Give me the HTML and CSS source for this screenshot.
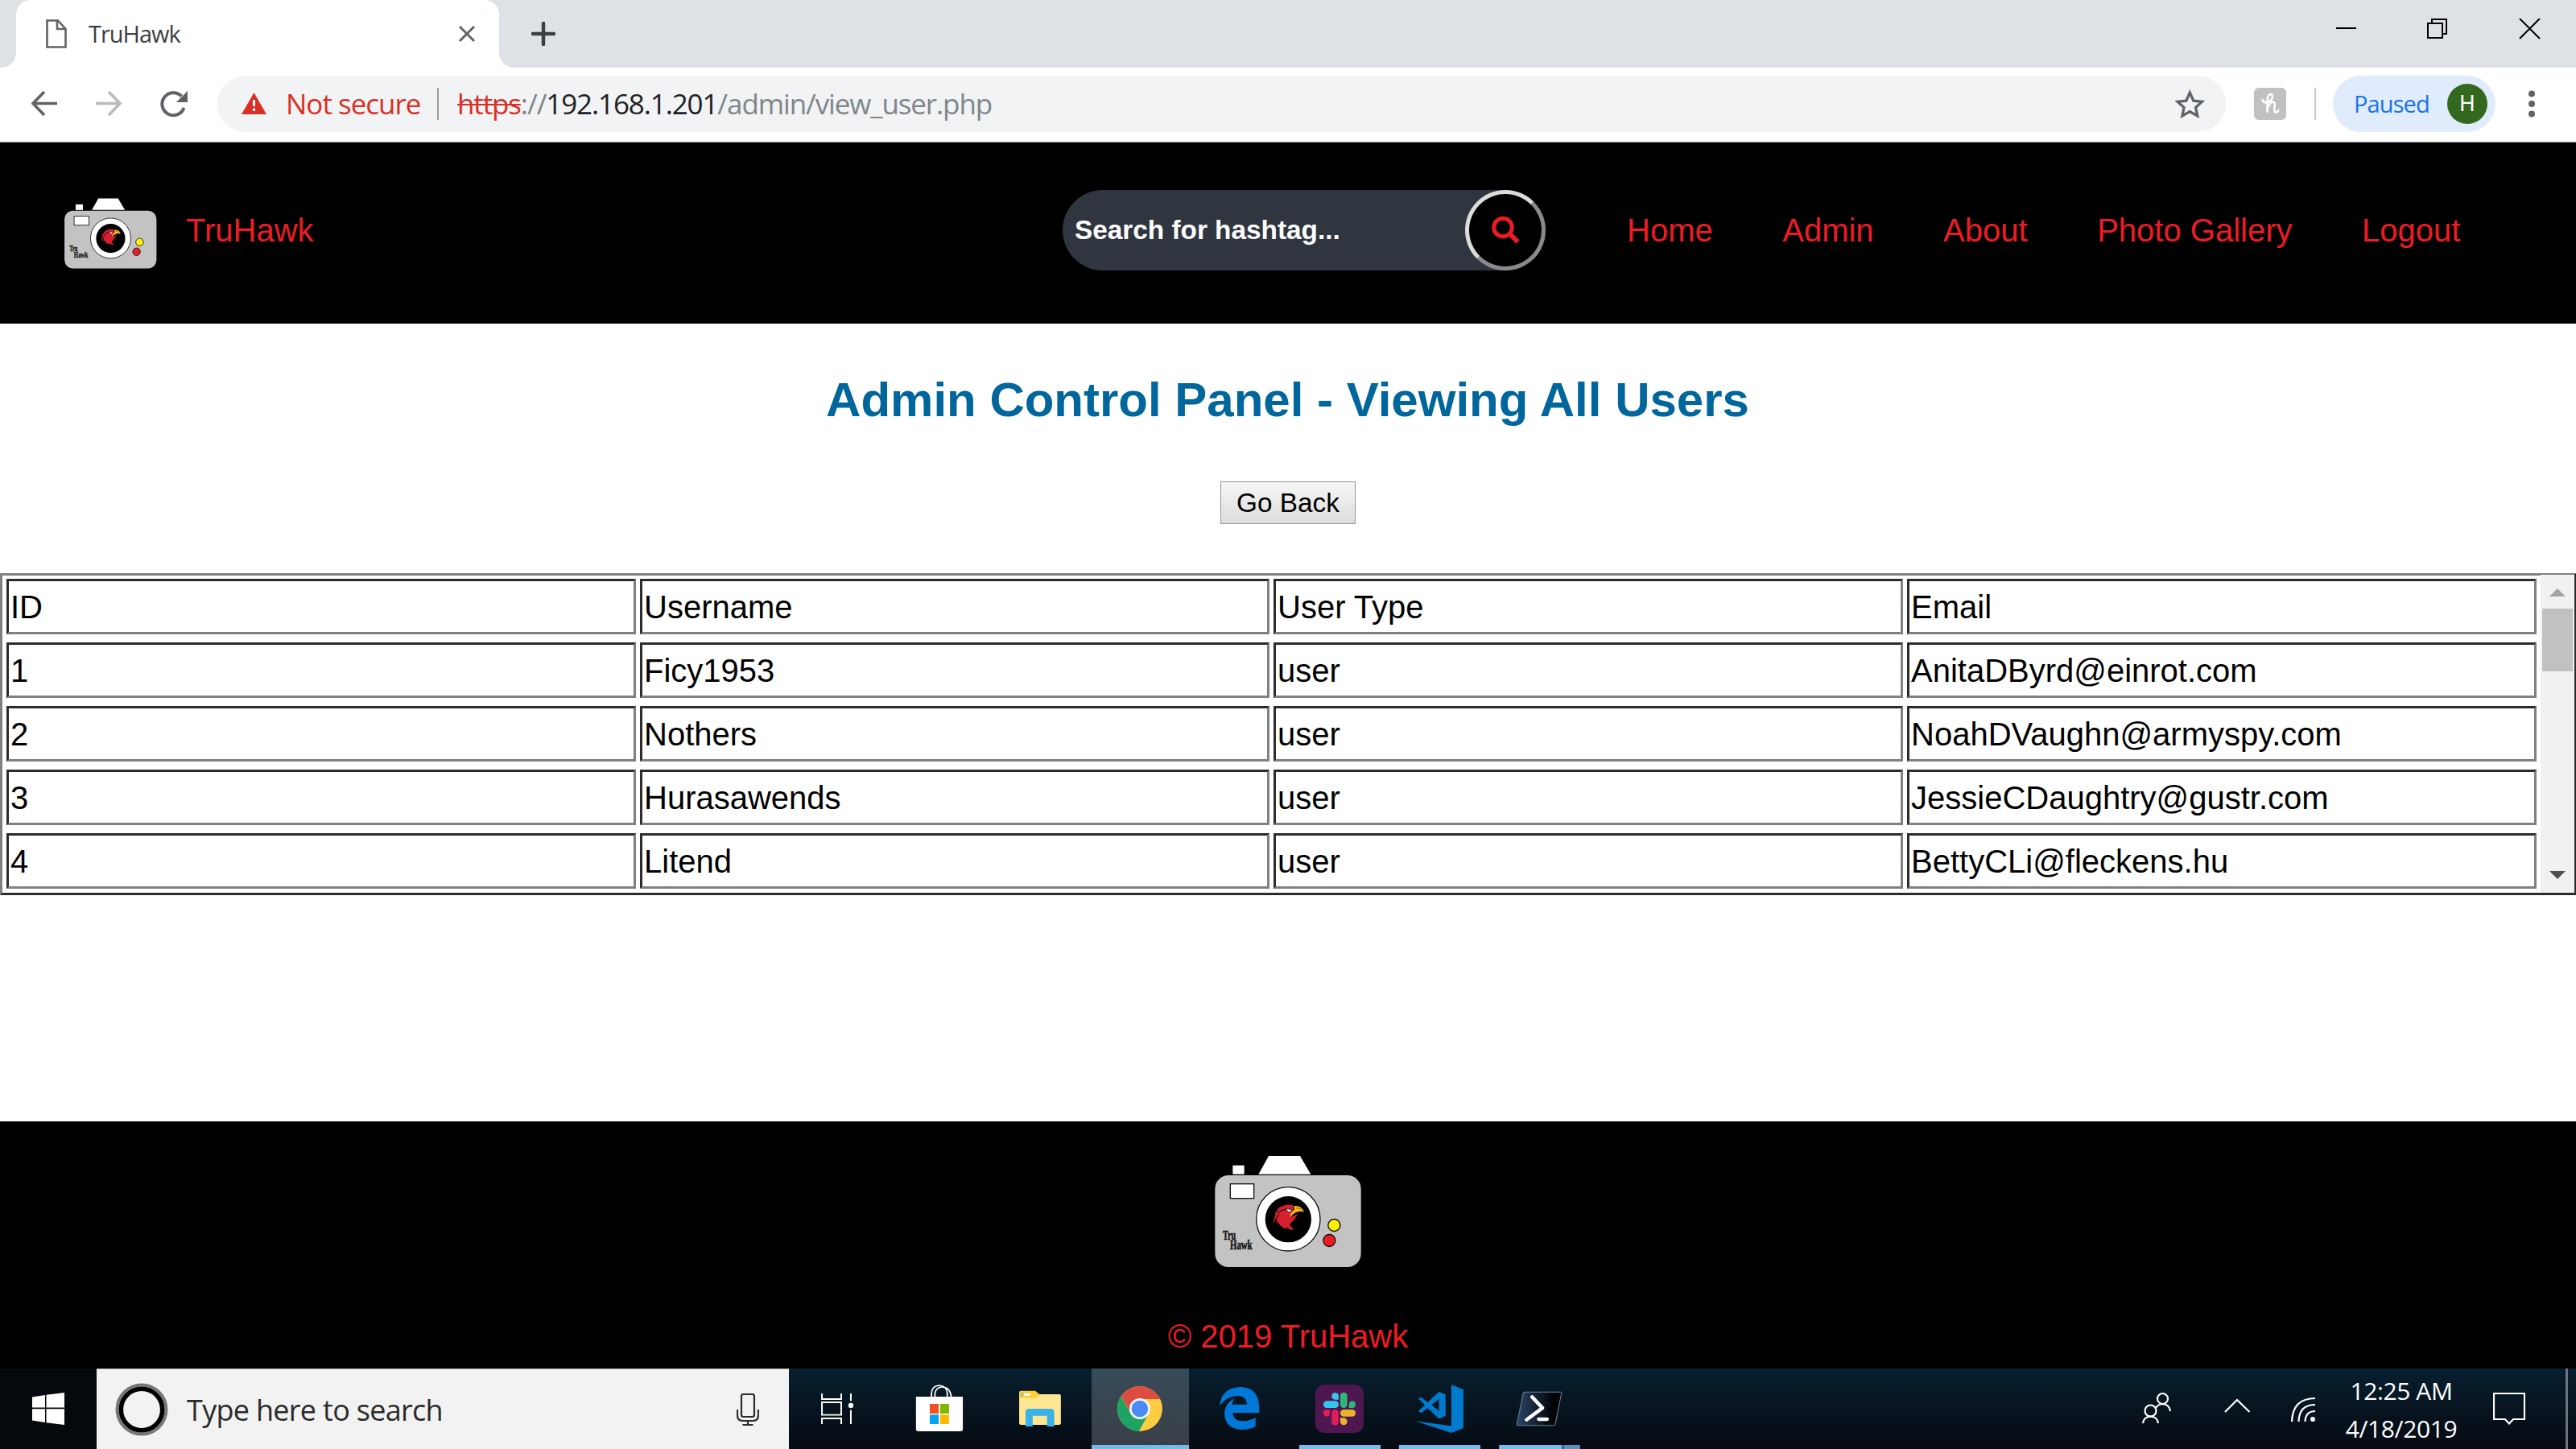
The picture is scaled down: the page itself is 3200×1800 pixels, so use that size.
FILE: index.html
```html
<!DOCTYPE html>
<html lang="en">
<head>
<meta charset="utf-8">
<title>TruHawk</title>
<link rel="stylesheet" href="styles.css">
</head>
<body>
<svg width="0" height="0" class="defs">
  <symbol id="camera" viewBox="318 155 564 435">
    <path d="M528 167H645L685 235H490Z" fill="#fff"/>
    <rect x="394" y="202" width="43" height="33" fill="#fff"/>
    <rect x="328" y="239" width="544" height="342" rx="50" fill="#c3c3c3"/>
    <rect x="385" y="271" width="88" height="54" fill="#fff" stroke="#111" stroke-width="4"/>
    <circle cx="601" cy="402" r="119" fill="#fff" stroke="#111" stroke-width="4"/>
    <circle cx="601" cy="403" r="86" fill="#000"/>
    <path d="M543 420L554 383L550 384L562 368L560 366Q572 352 596 349Q615 347 622 353L616 380L606 397L637 382L624 403L606 422L621 443Q604 442 598 433L590 438Q570 430 562 413L558 421L559 400L550 409Z" fill="#d6202f"/>
    <path d="M561 381Q570 368 591 366M553 404L567 383" stroke="#000" stroke-width="3" fill="none"/>
    <path d="M622 353Q652 350 660 376Q644 370 628 378Q614 386 608 397Q607 384 615 376Q624 370 624 362Z" fill="#fdb61c"/>
    <path d="M630 361L658 366" stroke="#7c4a10" stroke-width="2"/>
    <path d="M592 363L613 367L610 376L601 375Z" fill="#fff" stroke="#000" stroke-width="2"/>
    <circle cx="772" cy="425" r="22.500" fill="#fff200" stroke="#111" stroke-width="4"/>
    <circle cx="754" cy="482" r="22.500" fill="#ed1c24" stroke="#111" stroke-width="4"/>
    <text transform="translate(357 480) scale(.65 1)" class="cam-text">Tru</text>
    <text transform="translate(384 516) scale(.69 1)" class="cam-text">Hawk</text>
  </symbol>
</svg>

<div class="tabstrip">
  <div class="tab">
    <svg class="file" width="26" height="36" viewBox="57 24 26 36"><path d="M58.500 25.500H72L81.500 36V58.500H58.500ZM71 25.500V36H81.500" fill="none" stroke="#5f6368" stroke-width="2.600"/></svg>
    <span class="tab-title">TruHawk</span>
    <svg class="tab-close" width="22" height="22" viewBox="0 0 22 22"><path d="M2 2L20 20M20 2L2 20" stroke="#5f6368" stroke-width="3"/></svg>
  </div>
  <svg class="newtab" width="30" height="30" viewBox="0 0 30 30"><path d="M15 2V28M2 15H28" stroke="#3c4043" stroke-width="4.500" stroke-linecap="round"/></svg>
  <svg class="winctl" width="254" height="26" viewBox="2902 23 254 26"><path d="M2902 35H2927" stroke="#000" stroke-width="2"/><path d="M3016 29H3034V47H3016ZM3021 29V24H3039V42H3034M3130 23L3155 48M3155 23L3130 48" fill="none" stroke="#000" stroke-width="2"/></svg>
</div>

<div class="toolbar">
  <svg class="navs" width="196" height="34" viewBox="38 112 196 34" fill="none" stroke-width="3.600">
    <path d="M71 128.500H42M55 114L41 128.500L55 143" stroke="#5f6368"/>
    <path d="M119 128.500H148M135 114L149 128.500L135 143" stroke="#bababb"/>
    <path d="M228.500 134A14 14 0 1 1 225.500 119.500" stroke="#5f6368" stroke-width="4"/><path d="M233 113V127H219Z" fill="#5f6368"/>
  </svg>
  <div class="omnibox">
    <svg width="32" height="28" viewBox="300 116 32 28"><path d="M315.500 116L331 143H300Z" fill="#d93025"/><path d="M315.500 125V133M315.500 135.500V139" stroke="#fff" stroke-width="3"/></svg>
    <span class="notsecure">Not secure</span>
    <i class="odiv"></i>
    <span class="url"><s>https</s>://<b>192.168.1.201</b>/admin/view_user.php</span>
    <svg class="star" width="37" height="36" viewBox="2702 111 37 36"><path d="M2720.300 115L2724.800 125.200L2735.500 126.300L2727.500 133.500L2729.800 144L2720.300 138.500L2710.800 144L2713.100 133.500L2705.100 126.300L2715.800 125.200Z" fill="none" stroke="#5f6368" stroke-width="3.200"/></svg>
  </div>
  <svg class="honey" width="40" height="40" viewBox="2800 109 40 40"><rect x="2800" y="109" width="40" height="40" rx="6" fill="#c1c1c1"/><path d="M2810.500 124Q2812 128.500 2817 127Q2823 124.500 2823 119.500Q2822 116 2819 117.500Q2816.600 119.500 2816.600 125V139M2816.600 136Q2819 127 2823.500 126.500Q2827 127 2825.500 133Q2824.500 139 2827 139.500Q2829.500 139.500 2830.500 137" fill="none" stroke="#fff" stroke-width="2.600" stroke-linecap="round"/></svg>
  <i class="tdiv"></i>
  <div class="profile"><span class="paused">Paused</span><span class="avatar">H</span></div>
  <svg class="dots" width="10" height="36" viewBox="0 0 10 36" fill="#5f6368"><circle cx="5" cy="5.500" r="4"/><circle cx="5" cy="18" r="4"/><circle cx="5" cy="30.500" r="4"/></svg>
</div>

<header class="header">
  <svg class="logo" width="118.500" height="91.500"><use href="#camera"/></svg>
  <a class="brand">TruHawk</a>
  <div class="search">
    <span class="search-text">Search for hashtag...</span>
    <span class="search-btn"><svg width="36" height="36" viewBox="1852 267 36 36" fill="none" stroke="#ed1c24"><circle cx="1867" cy="281.500" r="11.300" stroke-width="5"/><path d="M1875 289L1885.500 299.500" stroke-width="6"/></svg></span>
  </div>
  <nav class="menu"><a>Home</a><a>Admin</a><a>About</a><a>Photo Gallery</a><a>Logout</a></nav>
</header>

<main class="main">
  <h1>Admin Control Panel - Viewing All Users</h1>
  <button class="back">Go Back</button>
  <div class="users">
    <div class="grid">
      <div>ID</div><div>Username</div><div>User Type</div><div>Email</div>
      <div>1</div><div>Ficy1953</div><div>user</div><div>AnitaDByrd@einrot.com</div>
      <div>2</div><div>Nothers</div><div>user</div><div>NoahDVaughn@armyspy.com</div>
      <div>3</div><div>Hurasawends</div><div>user</div><div>JessieCDaughtry@gustr.com</div>
      <div>4</div><div>Litend</div><div>user</div><div>BettyCLi@fleckens.hu</div>
    </div>
    <div class="scrollbar"><i class="up"></i><i class="thumb"></i><i class="down"></i></div>
  </div>
</main>

<footer class="footer">
  <svg width="188" height="145"><use href="#camera"/></svg>
  <p>© 2019 TruHawk</p>
</footer>

<div class="taskbar">
  <div class="start"><svg width="40" height="40" viewBox="0 0 40 40" fill="#fff"><path d="M0 5.500L16 3V18.500H0ZM17.500 2.700L40 0V18.500H17.500ZM0 20.300H16V37L0 34.500ZM17.500 20.300H40V40L17.500 37.300Z"/></svg></div>
  <div class="cortana">
    <svg width="66" height="66" viewBox="-33 -33 66 66" fill="none"><circle r="30.500" stroke="#777" stroke-width="4"/><circle r="25.700" stroke="#000" stroke-width="5.600"/></svg>
    <span class="hint">Type here to search</span>
    <svg class="mic" width="28" height="40" viewBox="915 1730 28 40" fill="none" stroke="#2b2b2b" stroke-width="2.200"><rect x="921" y="1731" width="16" height="28" rx="2.500"/><path d="M916 1750V1757Q916 1764 923 1764H935Q942 1764 942 1757V1750M929 1764V1769M922.500 1769H935.500"/></svg>
  </div>
  <svg width="125" height="100" viewBox="280 30 350 300" preserveAspectRatio="none" fill="none" stroke="#fff" stroke-width="5.500"><path d="M395 123V144H462V123M395 156H462V203H395ZM395 237V216H462V237M495.500 123V151M495.500 185V237"/><ellipse cx="495.500" cy="168" rx="9" ry="9.500" fill="#fff" stroke="none"/></svg>
  <svg width="124" height="100" viewBox="630 30 347.200 300" preserveAspectRatio="none"><path d="M776 136V121Q778 94 804 93Q828 95 831 121V136M788 136V122Q792 101 811 99Q840 98 845 136" fill="none" stroke="#fff" stroke-width="5"/><path d="M722 135H885V256Q885 264 877 264H730Q722 264 722 256Z" fill="#fff"/><path fill="#f25022" d="M770 162H801V198H770Z"/><path fill="#7fba00" d="M806 162H837V198H806Z"/><path fill="#00a4ef" d="M770 202H801V237H770Z"/><path fill="#ffb900" d="M806 202H837V237H806Z"/></svg>
  <svg width="124" height="100" viewBox="977.200 30 347.200 300" preserveAspectRatio="none"><path d="M1081 126H1221Q1226 126 1226 132V234Q1226 240 1220 240H1087Q1081 240 1081 234Z" fill="#ffe693"/><path d="M1081 140V119Q1081 113 1087 113H1137L1152 127L1141 140Z" fill="#ffcd34"/><path d="M1089 123H1120V131H1089Z" fill="#fff"/><path d="M1089 123H1096V131H1089Z" fill="#3bb3ea"/><path d="M1103 246V193Q1103 180 1116 180H1190Q1203 180 1203 193V246H1178V206H1128V246Z" fill="#38b3e8"/></svg>
  <svg class="active" width="124" height="100" viewBox="-243.600 30 347.200 300" preserveAspectRatio="none"><path d="M-235 30H104V330H-235Z" fill="url(#tile)"/><path d="M-235 315H104V330H-235Z" fill="#76b9ed"/>
    <defs><linearGradient id="tile" x2="0" y2="1"><stop stop-color="#364b58"/><stop offset="1" stop-color="#3b3f47"/></linearGradient></defs>
    <g transform="translate(-67.500 180) scale(2.800 3)"><circle r="28" fill="#ffcd42"/><path d="M-23 -15.500A28 28 0 0 1 25.500 -12H0L-11 6Z" fill="#dc4c40"/><path d="M-23.300 -15.500A28 28 0 0 0 -1 28L11 6L-11 6Z" fill="#1da362"/><circle r="13" fill="#f4f7fa"/><circle r="10.300" fill="#4c8bf5"/></g></svg>
  <svg width="124" height="100" viewBox="103.600 30 347.200 300" preserveAspectRatio="none"><path d="M210 170Q216 102 282 99Q346 100 348 175V195H255Q258 226 293 226Q316 225 335 213V246Q314 258 286 258Q228 254 227 196Q229 158 263 141Q254 151 254 164H305Q304 133 276 132Q236 131 210 170Z" fill="#0078d7"/></svg>
  <svg width="124" height="100" viewBox="450.800 30 347.200 300" preserveAspectRatio="none"><rect x="543" y="90" width="168" height="180" rx="34" fill="#4f1750"/><path d="M487 315H770V330H487Z" fill="#76b9ed"/>
    <path d="M624 146H612Q600 145 600 133Q601 120 612 120Q624 121 624 133Z" fill="#36c5f0"/><rect x="571" y="151" width="53" height="26" rx="12" fill="#36c5f0"/>
    <rect x="630" y="119" width="24" height="58" rx="12" fill="#2eb67d"/><path d="M660 177V164Q661 151 672 151Q683 152 683 164Q683 177 672 177Z" fill="#2eb67d"/>
    <rect x="630" y="183" width="53" height="26" rx="12" fill="#ecb22e"/><path d="M630 214H642Q654 216 654 228Q653 240 642 241Q630 240 630 228Z" fill="#ecb22e"/>
    <rect x="600" y="183" width="24" height="58" rx="12" fill="#e01e5a"/><path d="M594 183V196Q593 209 582 209Q571 208 571 196Q571 183 582 183Z" fill="#e01e5a"/></svg>
  <svg width="124" height="100" viewBox="798 30 347.200 300" preserveAspectRatio="none"><path d="M1016 90L1058 108V252L1016 270L891 226L1016 244Z" fill="#007acc"/><path d="M901 142L911 137L934 156L973 117L996 127V207L973 217L934 178L911 196L901 190L924 166ZM973 145L947 166L973 188Z" fill="#007acc" fill-rule="evenodd"/><path d="M834 315H1117V330H834Z" fill="#76b9ed"/></svg>
  <svg width="124" height="100" viewBox="1145.200 30 347.200 300" preserveAspectRatio="none"><defs><linearGradient id="ps"><stop stop-color="#2b4468"/><stop offset=".8" stop-color="#020406"/></linearGradient></defs><path d="M1273 118H1396Q1400 118 1399 123L1378 237Q1377 242 1372 242H1248Q1243 242 1244 237L1266 124Q1267 118 1273 118Z" fill="url(#ps)" stroke="#6b809c" stroke-width="3"/><path d="M1297 136L1333 177L1278 221M1320 219H1349" fill="none" stroke="#fff" stroke-width="13" stroke-linecap="round" stroke-linejoin="round"/><path d="M1182 315H1400V330H1182Z" fill="#76b9ed"/><path d="M1400 315H1408V330H1400Z" fill="#41698a"/><path d="M1408 315H1464V330H1408Z" fill="#5a8fba"/></svg>
  <svg class="tray" width="218" height="42" viewBox="2660 1730 218 42" fill="none" stroke="#fff" stroke-width="2.200">
    <circle cx="2686.500" cy="1738.500" r="6.500"/><path d="M2678 1750Q2681 1745 2687 1745Q2695 1746 2696 1754"/><circle cx="2671.500" cy="1753.500" r="7"/><path d="M2662 1769Q2663 1761 2671.500 1760.500Q2680 1761 2681 1769"/>
    <path d="M2764 1755L2779 1740L2794.500 1755"/>
    <path d="M2847 1767Q2848 1738 2876 1738M2855.500 1767Q2856 1746 2876 1746M2863.500 1767Q2864 1754 2876 1754"/><circle cx="2873" cy="1764" r="3" fill="#fff" stroke="none"/>
  </svg>
  <div class="clock"><span class="time">12:25 AM</span><span class="date">4/18/2019</span></div>
  <svg class="notif" width="40" height="40" viewBox="3097 1730 40 40"><path d="M3098 1731H3136V1763H3122L3117 1768.500L3112 1763H3098Z" fill="none" stroke="#fff" stroke-width="2.200"/></svg>
  <i class="peek"></i>
</div>
</body>
</html>
```
FILE: styles.css
```css
* { box-sizing: border-box; }
body {
  margin: 0;
  width: 3200px;
  height: 1800px;
  overflow: hidden;
  display: flex;
  flex-direction: column;
  background: #fff;
  color: #000;
  font: 40px/46px "Liberation Sans", Arial, sans-serif;
}
svg { flex: none; display: block; }
.defs { position: absolute; }
.cam-text { font: bold 47px "Liberation Serif", serif; fill: #111; stroke: #111; stroke-width: 1.5px; }

/* Browser tab strip */
.tabstrip {
  flex: none;
  height: 84px;
  display: flex;
  align-items: flex-start;
  padding-left: 20px;
  background: #dee1e6;
  font-family: "Open Sans", "Noto Sans", sans-serif;
}
.tab {
  position: relative;
  width: 600px;
  height: 84px;
  padding: 0 29px 0 37px;
  display: flex;
  align-items: center;
  background: #fff;
  border-radius: 18px 18px 0 0;
}
.tab::before, .tab::after {
  content: "";
  position: absolute;
  bottom: 0;
  width: 18px;
  height: 18px;
}
.tab::before { left: -18px; background: radial-gradient(circle at 0 0, #dee1e6 17.5px, #fff 18px); }
.tab::after { right: -18px; background: radial-gradient(circle at 100% 0, #dee1e6 17.5px, #fff 18px); }
.tab-title { margin-left: 27px; font-size: 29px; letter-spacing: -1px; color: #3c4043; }
.tab-close { margin-left: auto; }
.newtab { margin: 27px 0 0 40px; }
.winctl { margin: 23px 44px 0 auto; }

/* Address bar row */
.toolbar {
  flex: none;
  height: 93px;
  padding: 0 50px 2px 38px;
  display: flex;
  align-items: center;
  background: #fff;
  border-bottom: 1px solid #a9a9a9;
  font-family: "Open Sans", "Noto Sans", sans-serif;
}
.omnibox {
  width: 2495px;
  height: 70px;
  margin-left: 36px;
  padding: 0 26px 0 30px;
  display: flex;
  align-items: center;
  border-radius: 35px;
  background: #f1f3f4;
  font-size: 35px;
}
.notsecure { width: 168px; margin-left: 23px; letter-spacing: -1px; color: #d93025; white-space: nowrap; }
.odiv { width: 2px; height: 40px; margin-left: 20px; background: #9aa0a6; }
.url { margin-left: 23px; letter-spacing: -1.13px; color: #80868b; white-space: nowrap; }
.url s { color: #d93025; text-decoration-thickness: 2px; }
.url b { color: #202124; font-weight: 400; }
.star { margin-left: auto; }
.honey { margin-left: 35px; }
.tdiv { width: 2px; height: 40px; margin-left: 35px; background: #c6c9cd; }
.profile {
  width: 202px;
  height: 70px;
  margin-left: 21px;
  padding: 0 10px 0 26px;
  display: flex;
  align-items: center;
  justify-content: space-between;
  border-radius: 35px;
  background: #e0ecfb;
}
.paused { font-size: 29px; letter-spacing: -.9px; color: #1a73e8; }
.avatar {
  width: 50px;
  height: 50px;
  border-radius: 50%;
  background: #33691e;
  color: #fff;
  font: 27px/50px Roboto, sans-serif;
  text-align: center;
}
.dots { margin-left: 40px; }

/* Site header */
.header {
  flex: none;
  height: 225px;
  display: flex;
  align-items: center;
  background: #000;
  color: #ed1c24;
}
.logo { margin: 0 0 0 77.5px; }
.brand { margin: -7px 0 0 35px; width: 160px; }
.search {
  width: 600px;
  height: 100px;
  margin: -7px 0 0 929px;
  padding-left: 15px;
  display: flex;
  align-items: center;
  justify-content: space-between;
  border-radius: 50px;
  background: #2f3640;
  color: #fff;
  font-size: 33.33px;
  font-weight: bold;
}
.search-btn {
  width: 100px;
  height: 100px;
  display: flex;
  align-items: center;
  justify-content: center;
  border: 5px solid;
  border-color: #dcdcdc #8a8a8a #8a8a8a #dcdcdc;
  border-radius: 50%;
  background: #000;
}
.menu { display: flex; gap: 86.5px; margin: -7px 0 0 101px; white-space: nowrap; }

/* Page body */
.main {
  flex: none;
  height: 991px;
  display: flex;
  flex-direction: column;
  align-items: center;
}
h1 { margin: 60px 1px 0 0; font-size: 60px; line-height: 69px; color: #00669c; }
.back {
  width: 168px;
  height: 53px;
  margin: 67px 0 61px;
  padding: 0;
  border: 1px solid #979797;
  background: linear-gradient(#f6f6f6, #ddd);
  color: #000;
  font: 33.33px "Liberation Sans", Arial, sans-serif;
}
.users {
  width: 3200px;
  height: 400px;
  display: flex;
  border: solid;
  border-width: 2px 2px 3px 3px;
  border-color: #808080 #2c2c2c #2c2c2c #808080;
}
.grid {
  width: 3153px;
  padding: 4px 5px 5px;
  display: grid;
  grid-template-columns: repeat(4, 782px);
  grid-auto-rows: 69px;
  gap: 10px 5px;
  border-top: 1px solid #808080;
}
.grid div {
  padding-left: 2px;
  border: 3px solid;
  border-color: #2c2c2c #808080 #808080 #2c2c2c;
  line-height: 65px;
}
.scrollbar {
  width: 42px;
  display: flex;
  flex-direction: column;
  align-items: center;
  background: #f1f1f1;
}
.up, .down { border: 10px solid transparent; }
.up { margin-top: 7px; border-bottom-color: #a3a3a3; }
.thumb { width: 38px; height: 78px; margin-top: 15px; background: #c1c1c1; }
.down { margin: auto 0 7px; border-top-color: #505050; }

/* Footer */
.footer {
  flex: none;
  height: 307px;
  padding-top: 38.5px;
  display: flex;
  flex-direction: column;
  align-items: center;
  background: #000;
  color: #ed1c24;
}
.footer p { margin: 60px 0 0; }

/* Taskbar */
.taskbar {
  flex: none;
  height: 100px;
  display: flex;
  align-items: center;
  background: linear-gradient(#071f30, #07141f 50%, #060b13);
  color: #fff;
  font-family: "Open Sans", "Noto Sans", sans-serif;
}
.start {
  width: 120px;
  height: 100px;
  display: flex;
  align-items: center;
  justify-content: center;
  background: #05090d;
}
.cortana {
  width: 860px;
  height: 100px;
  padding: 0 37px 0 23px;
  display: flex;
  align-items: center;
  background: #f2f2f2;
  border-top: 1px solid #b5b5b5;
}
.hint { margin: 2px 0 0 23px; font-size: 36px; letter-spacing: -.7px; color: #2b2b2b; white-space: nowrap; }
.mic { margin-left: auto; }
.tray { margin-left: 687px; }
.clock {
  width: 140px;
  margin: 2px 0 0 35px;
  display: flex;
  flex-direction: column;
  align-items: center;
  font-size: 30px;
  line-height: 47px;
  letter-spacing: -.4px;
  white-space: nowrap;
}
.notif { margin-left: 44px; }
.peek { width: 3px; height: 100px; margin: 0 10px 0 auto; background: #6d757c; }
```
